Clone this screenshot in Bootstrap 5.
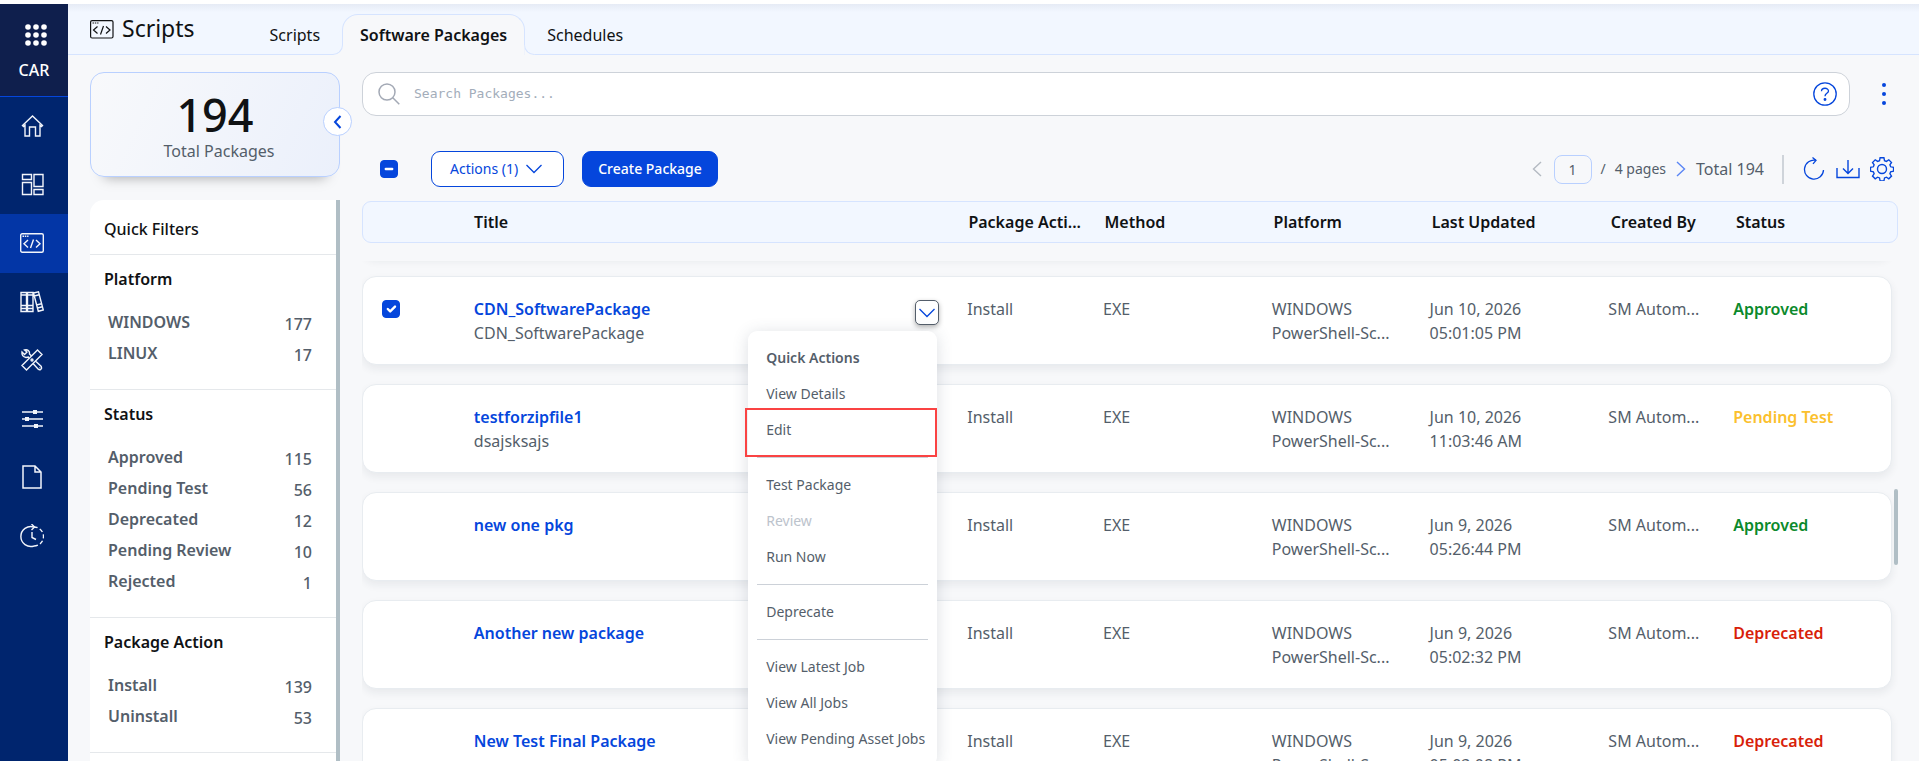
<!DOCTYPE html>
<html lang="en">
<head>
<meta charset="utf-8">
<meta name="viewport" content="width=device-width, initial-scale=1">
<title>Scripts - Software Packages</title>
<link rel="stylesheet" href="https://cdn.jsdelivr.net/npm/bootstrap@5.3.0/dist/css/bootstrap.min.css">
<style>
:root{--blue:#0546dc;--ink:#101214;--muted:#545e6a;--line:#d6e4ff}
body{font-family:"Noto Sans",sans-serif;font-size:16px;line-height:24px;color:var(--ink);background:#f7f8fa;height:100vh;overflow:hidden;border-top:4px solid #fff}
svg{display:block;fill:none;stroke:currentColor;flex:none}
button{font-family:inherit}
.icon-btn{background:none;border:0;padding:0;color:var(--blue)}
.rail{width:68px;background:#00256e;color:#fff}
.rail-top{height:93px;background:#0f1f4d;border-bottom:1px solid #0546dc;font-weight:500;padding-top:20px}
.rail-top svg{margin-left:3px}
.rail-list{display:grid;grid-auto-rows:1fr;height:468px}
.rail-list a{display:flex;align-items:center;padding-left:20px;color:#f2f5fb}
.rail-list a.active{background:#0336a6}
.topbar{height:51px;background:linear-gradient(#e6ebf5,#f2f7ff 8px);border-bottom:1px solid var(--line);padding-left:22px}
.page-title{font-size:23px;line-height:32px;margin:8px 0 0 0}
.tabs{margin:10px 0 0 56px}
.tabs a{color:var(--ink);text-decoration:none;height:41px;padding:8px 18px;border:1px solid transparent}
.tabs a.active{position:relative;font-weight:600;background:#f7f8fa;border-color:var(--line);border-bottom:0;border-radius:16px 16px 0 0;padding:8px 17px;margin:0 3px}
.tabs a.active::before,.tabs a.active::after{content:"";position:absolute;bottom:0;width:10px;height:10px;border:solid var(--line);background:#f2f7ff;box-shadow:0 0 0 4px #f7f8fa;clip-path:inset(0 0 0 0)}
.tabs a.active::before{left:-10px;border-width:0 1px 1px 0;border-radius:0 0 10px 0}
.tabs a.active::after{right:-10px;border-width:0 0 1px 1px;border-radius:0 0 0 10px}
.side{width:250px}
.total-card{height:105px;border:1px solid #b9d0ff;border-radius:14px;background:linear-gradient(115deg,#f8f9fb,#ebf0fb);box-shadow:0 14px 12px -14px rgba(0,0,0,.35);text-align:center;padding-top:18px}
.total-num{font-size:45px;line-height:48px;font-weight:500}
.collapse-btn{position:absolute;right:-12px;top:35px;width:29px;height:29px;border:1px solid #b9d0ff;border-radius:50%;background:#fff;color:var(--blue);padding:0 0 0 9px}
.text-dim{color:var(--muted)}
.filters{margin-top:23px;background:#fff;border-radius:14px 0 0 0;border-right:4px solid #b0bec5;min-height:0}
.filters h2{font-size:16px;line-height:24px;margin:0;padding:17px 14px 13px;font-weight:500}
.filters section{border-top:1px solid #e5e8eb;padding:12px 24px 20px 14px}
.filters h3{font-size:16px;line-height:24px;font-weight:600;margin:0 0 16px}
.filters ul{margin:0;padding:0 0 0 4px;list-style:none}
.filters li{display:flex;justify-content:space-between;height:31px;padding-top:3px;font-weight:600;color:var(--muted)}
.filters li span{padding-top:2px;font-weight:500}
.search-box{height:44px;border:1px solid #cdd2d9;border-radius:14px;background:#fff;padding:0 12px 0 15px}
.search-box input{border:0;outline:0;background:none;font:13px/20px "DejaVu Sans Mono",monospace;color:#333;margin-left:12px}
.search-box input::placeholder{color:#a3adba;opacity:1}
.tools{margin-top:35px;height:36px}
.form-check-input.tick,.form-check-input.tick:indeterminate{width:18px;height:18px;margin:0;border-radius:4px;border-color:var(--blue);background-color:var(--blue);flex:none}
.btn.act{height:36px;border-radius:9px;font-size:14px;line-height:20px;border:1px solid var(--blue)}
.btn.act-line{color:var(--blue);background:#fff;padding:0 21px 0 18px}
.btn.act-fill{color:#fff;background:var(--blue);font-weight:500;padding:0 15px;margin-left:18px}
.page-no{width:38px;height:29px;border:1px solid #b9d0ff;border-radius:8px;background:transparent;font-size:14px;color:var(--muted);text-align:center;padding:0}
.rule{width:2px;height:29px;background:#cfd4da}
.pkg{margin:14px 0 0;display:flex;flex-direction:column;min-height:0;flex:1}
.pkg thead{display:block}
.pkg tr{display:grid;grid-template-columns:minmax(0,110fr) minmax(0,494fr) minmax(0,136fr) minmax(0,169fr) minmax(0,158fr) minmax(0,179fr) minmax(0,125fr) minmax(0,159fr)}
.pkg thead tr{height:42px;align-items:center;background:#f2f7ff;border:1px solid var(--line);border-radius:9px;padding-right:3px}
.pkg th{font-weight:600;white-space:nowrap}
.pkg tbody{display:block;position:relative;margin-top:18px;padding:0 6px 0 0;overflow:hidden;flex:1}
.pkg tbody tr{height:89px;background:#fff;border:1px solid #e8ecf0;border-radius:14px;box-shadow:0 4px 8px rgba(30,40,60,.07);padding-top:19px;margin-bottom:19px}
.pkg tbody tr.gone{margin-top:-93px}
.pkg td{color:var(--muted)}
.pkg td a{color:var(--blue);font-weight:600;text-decoration:none}
.pkg .ok{color:#0b8a2c}.pkg .wait{color:#fbc02d}.pkg .dead{color:#d81f0b}
.st{font-weight:600}
.thumb{position:absolute;right:0;top:228px;width:4px;height:76px;border-radius:2px;background:#b0bec5}
.more{width:24px;height:25px;border:1px solid #545e6a;border-radius:5px;background:#fff;color:var(--blue);padding:0 0 0 3px;box-shadow:0 2px 5px rgba(0,0,0,.3);margin:3px 26px 0 0}
.dropdown-menu.quick{display:block;position:absolute;top:35px;right:29px;width:189px;min-width:0;border:0;border-radius:9px;padding:9px 0;margin:0;box-shadow:0 2px 16px rgba(60,75,100,.18);font-size:14px}
.quick .dropdown-item,.quick .dropdown-header{height:36px;line-height:20px;font-size:14px;padding:8px 0 8px 18px;color:var(--muted)}
.quick .dropdown-header{font-weight:600}
.quick .dropdown-item:disabled{color:#bcc3cc}
.quick .dropdown-divider{margin:9px;border-top:1px solid #ccd1d8;opacity:1}
.flag{position:relative}
.flag::after{content:"";position:absolute;inset:-4px 0 -9px -3px;border:2px solid #fa4343;z-index:1}
</style>
</head>
<body class="d-flex">
<nav class="rail d-flex flex-column flex-shrink-0" aria-label="Main">
  <div class="rail-top d-flex flex-column align-items-center">
    <svg width="22" height="22" viewBox="0 0 22 22" style="fill:#fff;stroke:none"><circle cx="3" cy="3" r="2.8"/><circle cx="11" cy="3" r="2.8"/><circle cx="19" cy="3" r="2.8"/><circle cx="3" cy="11" r="2.8"/><circle cx="11" cy="11" r="2.8"/><circle cx="19" cy="11" r="2.8"/><circle cx="3" cy="19" r="2.8"/><circle cx="11" cy="19" r="2.8"/><circle cx="19" cy="19" r="2.8"/></svg>
    <div class="mt-2 pt-1">CAR</div>
  </div>
  <div class="rail-list">
    <a href="#" aria-label="Home"><svg width="24" height="24" viewBox="0 0 24 24" stroke-width="1.400"><path d="M2.500 11.500 12.500 2l10 9.500-1 1-1.500-1.300V22h-4.500v-9h-6v9H5V11.200l-1.500 1.300z"/></svg></a>
    <a href="#" aria-label="Dashboards"><svg width="24" height="24" viewBox="0 0 24 24" stroke-width="1.400"><path d="M2.500 1.500h9v5h-9zM2.500 9.500h9v12h-9zM14 1.500h9v12h-9zM14 16.500h9v5h-9z"/></svg></a>
    <a href="#" class="active" aria-label="Scripts"><svg width="24" height="20" viewBox="0 0 24 20" stroke-width="1.400"><rect x=".7" y=".7" width="22.600" height="18.600" rx="1.500"/><path d="M8 7 4 10.700 8 14.400M16 7l4 3.700-4 3.700M13.500 6.500l-3 8.500"/><path d="M2.500 3.300h6" stroke-dasharray="1.500 .8"/></svg></a>
    <a href="#" aria-label="Library"><svg width="24" height="24" viewBox="0 0 24 24" stroke-width="1.400"><path d="M1 2.500h5.500v19H1zM7.500 2.500H13v19H7.500zM1 5h12M1 15.500h12M1 18.500h12M13.500 3l5-1.200L23.300 20l-5 1.300zM14.200 6l5-1.300M16.500 15l5-1.300M17.500 18l5-1.300"/></svg></a>
    <a href="#" aria-label="Tools"><svg width="24" height="24" viewBox="0 0 24 24" stroke-width="1.400"><path d="M17.500 2 22 6.500 6.500 22 2 17.500zM9 9 6 9.500C3 9 1.500 7 2 4l2.500 2.500L7 4 4.500 2C7.500 1 10 3 9.500 6L11 7.500M13.500 16l5 5.500c1.500 1 4-.8 2.800-3L16 13.500M19.500 19.500l.5.500"/><circle cx="12" cy="12" r="1"/></svg></a>
    <a href="#" aria-label="Settings"><svg width="24" height="24" viewBox="0 0 24 24" stroke-width="1.500"><path d="M2 5h21M2 12h21M2 19h21"/><path d="M13 5h4M5 12h4M14 19h4" stroke-width="4"/></svg></a>
    <a href="#" aria-label="Documents"><svg width="24" height="26" viewBox="0 0 24 26" stroke-width="1.500"><path d="M3 2h12l6 6v16H3zM15 2v6h6"/></svg></a>
    <a href="#" aria-label="History"><svg width="24" height="24" viewBox="0 0 24 24" stroke-width="1.400"><path d="M14 3A10 10 0 1 0 14 22"/><path d="M14 22a9.500 9.500 0 0 0 0-19" stroke-dasharray="4 2.500"/><path d="M11.500 0 14.500 3l-3 3M12 8v5.500l4 2"/></svg></a>
  </div>
</nav>
<div class="d-flex flex-column flex-grow-1" style="min-width:0">
  <header class="topbar d-flex flex-shrink-0">
    <div class="d-flex align-items-start">
      <svg class="me-2" style="margin-top:16px" width="24" height="19" viewBox="0 0 24 19" stroke-width="1.200"><rect x=".6" y=".6" width="22.400" height="17.400" rx="1.500"/><path d="M7.500 6.500 3.500 10l4 3.500M16 6.500l4 3.500-4 3.500M13.500 6l-3 8.500"/><path d="M2.500 3h6" stroke-dasharray="1.500 .8"/></svg>
      <h1 class="page-title fw-normal">Scripts</h1>
    </div>
    <nav class="tabs d-flex" aria-label="Sections">
      <a href="#">Scripts</a><a href="#" class="active" aria-current="page">Software Packages</a><a href="#">Schedules</a>
    </nav>
  </header>
  <div class="d-flex flex-grow-1" style="min-height:0;padding:17px 21px 0 22px;gap:22px">
    <aside class="side d-flex flex-column flex-shrink-0">
      <div class="position-relative flex-shrink-0">
        <div class="total-card"><div class="total-num">194</div><div class="text-dim ps-2">Total Packages</div></div>
        <button type="button" class="collapse-btn" aria-label="Collapse panel"><svg width="9" height="14" viewBox="0 0 9 14" stroke-width="2"><path d="M7.500 1 2 7l5.500 6"/></svg></button>
      </div>
      <div class="filters flex-grow-1 overflow-hidden">
        <h2>Quick Filters</h2>
        <section><h3>Platform</h3><ul><li>WINDOWS<span>177</span></li><li>LINUX<span>17</span></li></ul></section>
        <section><h3>Status</h3><ul><li>Approved<span>115</span></li><li>Pending Test<span>56</span></li><li>Deprecated<span>12</span></li><li>Pending Review<span>10</span></li><li>Rejected<span>1</span></li></ul></section>
        <section><h3>Package Action</h3><ul><li>Install<span>139</span></li><li>Uninstall<span>53</span></li></ul></section>
        <section></section>
      </div>
    </aside>
    <main class="d-flex flex-column flex-grow-1" style="min-width:0">
      <div class="d-flex align-items-center">
        <div class="search-box d-flex align-items-center flex-grow-1">
          <svg width="22" height="22" viewBox="0 0 22 22" stroke-width="1.500" style="color:#a3a9b5"><circle cx="9" cy="9" r="8"/><path d="m14.800 14.800 6.500 6.500"/></svg>
          <input class="flex-grow-1" type="text" placeholder="Search Packages..." aria-label="Search Packages">
          <button type="button" class="icon-btn" aria-label="Help"><svg width="24" height="24" viewBox="0 0 24 24" stroke-width="1.300"><circle cx="12" cy="12" r="11.200"/><path d="M8.500 9.300c0-4 7-4 7-.3 0 2.500-3.500 2.200-3.500 5.200"/><circle cx="12" cy="17.500" r=".8" fill="currentColor"/></svg></button>
        </div>
        <button type="button" class="icon-btn ms-4 me-1" aria-label="More options"><svg width="20" height="24" viewBox="0 0 20 24" style="fill:currentColor;stroke:none"><circle cx="10" cy="3" r="2"/><circle cx="10" cy="12" r="2"/><circle cx="10" cy="21" r="2"/></svg></button>
      </div>
      <div class="tools d-flex align-items-center flex-shrink-0">
        <input id="all" class="form-check-input tick" style="margin:0 33px 0 18px" type="checkbox" aria-label="Select all packages">
        <button type="button" class="btn act act-line d-flex align-items-center gap-2">Actions (1)<svg width="16" height="10" viewBox="0 0 16 10" stroke-width="1.300"><path d="m.5 1 7.500 7.500L15.500 1"/></svg></button>
        <button type="button" class="btn act act-fill">Create Package</button>
        <div class="d-flex align-items-center ms-auto text-dim">
          <button type="button" class="icon-btn me-2 pe-1" style="color:#b4bac2" aria-label="Previous page"><svg width="10" height="16" viewBox="0 0 10 16" stroke-width="1.400"><path d="M9 1 1.500 8 9 15"/></svg></button>
          <input class="page-no" type="text" value="1" aria-label="Page number">
          <span class="d-flex" style="font-size:14px;gap:9px;margin:0 10px 0 9px"><span>/</span><span>4 pages</span></span>
          <button type="button" class="icon-btn" style="color:#5b86f5" aria-label="Next page"><svg width="10" height="16" viewBox="0 0 10 16" stroke-width="1.400"><path d="M1 1l7.500 7L1 15"/></svg></button>
          <span style="margin:0 18px 0 10px">Total 194</span>
          <span class="rule"></span>
          <div class="d-flex" style="gap:10px;margin:0 4px 0 18px">
            <button type="button" class="icon-btn" aria-label="Refresh"><svg width="24" height="24" viewBox="0 0 24 24" stroke-width="1.300"><path d="M14 3.300A9.500 9.500 0 1 0 21.500 13M10.500.5l3.500 2.800-3 3.500"/></svg></button>
            <button type="button" class="icon-btn" aria-label="Download"><svg width="24" height="24" viewBox="0 0 24 24" stroke-width="1.400"><path d="M1 11v9.500h22V11M12 3v13.500M7 11.500l5 5 5-5"/></svg></button>
            <button type="button" class="icon-btn" aria-label="Table settings"><svg width="24" height="24" viewBox="0 0 24 24" stroke-width="1.400"><circle cx="12" cy="12" r="4.500"/><path d="M10 1h4l.6 3 2 .8 2.500-1.700 2.800 2.800-1.700 2.500.8 2 3 .6v4l-3 .6-.8 2 1.700 2.500-2.800 2.800-2.500-1.700-2 .8-.6 3h-4l-.6-3-2-.8-2.500 1.700-2.800-2.800 1.700-2.500-.8-2-3-.6v-4l3-.6.8-2-1.700-2.500 2.800-2.800 2.500 1.700 2-.8z" transform="translate(.5 -.2) scale(.96)"/></svg></button>
          </div>
        </div>
      </div>
      <table class="pkg">
        <thead><tr><th></th><th>Title</th><th>Package Acti...</th><th>Method</th><th>Platform</th><th>Last Updated</th><th>Created By</th><th>Status</th></tr></thead>
        <tbody id="rows"></tbody>
      </table>
    </main>
  </div>
</div>
<template id="quick">
  <div class="dropdown-menu quick show">
    <h6 class="dropdown-header">Quick Actions</h6>
    <button type="button" class="dropdown-item">View Details</button>
    <button type="button" class="dropdown-item flag">Edit</button>
    <hr class="dropdown-divider">
    <button type="button" class="dropdown-item">Test Package</button>
    <button type="button" class="dropdown-item" disabled>Review</button>
    <button type="button" class="dropdown-item">Run Now</button>
    <hr class="dropdown-divider">
    <button type="button" class="dropdown-item">Deprecate</button>
    <hr class="dropdown-divider">
    <button type="button" class="dropdown-item">View Latest Job</button>
    <button type="button" class="dropdown-item">View All Jobs</button>
    <button type="button" class="dropdown-item">View Pending Asset Jobs</button>
  </div>
</template>
<script src="https://cdn.jsdelivr.net/npm/bootstrap@5.3.0/dist/js/bootstrap.bundle.min.js"></script>
<script>
document.getElementById('all').indeterminate = true;
const packages = [
  ['CDN_SoftwarePackage', 'CDN_SoftwarePackage', 'Jun 10, 2026', '05:01:05 PM', 'Approved', 'ok'],
  ['testforzipfile1', 'dsajsksajs', 'Jun 10, 2026', '11:03:46 AM', 'Pending Test', 'wait'],
  ['new one pkg', '', 'Jun 9, 2026', '05:26:44 PM', 'Approved', 'ok'],
  ['Another new package', '', 'Jun 9, 2026', '05:02:32 PM', 'Deprecated', 'dead'],
  ['New Test Final Package', '', 'Jun 9, 2026', '05:03:08 PM', 'Deprecated', 'dead']
];
const more = '<button type="button" class="more flex-shrink-0" aria-label="Quick actions" aria-expanded="true"><svg width="16" height="10" viewBox="0 0 16 10" stroke-width="1.300"><path d="m.5 1 7.500 7.500L15.500 1"/></svg></button>';
document.getElementById('rows').innerHTML = '<tr class="gone" aria-hidden="true"></tr>' + packages.map((p, i) => `<tr>
  <td>${i ? '' : '<input class="form-check-input tick" style="margin:3px 0 0 18px" type="checkbox" checked aria-label="Select ' + p[0] + '">'}</td>
  <td class="${i ? '' : 'position-relative d-flex justify-content-between'}"><div><a href="#">${p[0]}</a><div>${p[1]}</div></div>${i ? '' : more + document.getElementById('quick').innerHTML}</td>
  <td>Install</td><td>EXE</td><td>WINDOWS<br>PowerShell-Sc...</td><td>${p[2]}<br>${p[3]}</td><td>SM Autom...</td>
  <td class="st"><span class="${p[5]}">${p[4]}</span></td></tr>`).join('') + '<tr class="p-0 m-0 border-0 shadow-none bg-transparent" style="height:0"><td class="p-0"><div class="thumb"></div></td></tr>';
</script>
</body>
</html>
